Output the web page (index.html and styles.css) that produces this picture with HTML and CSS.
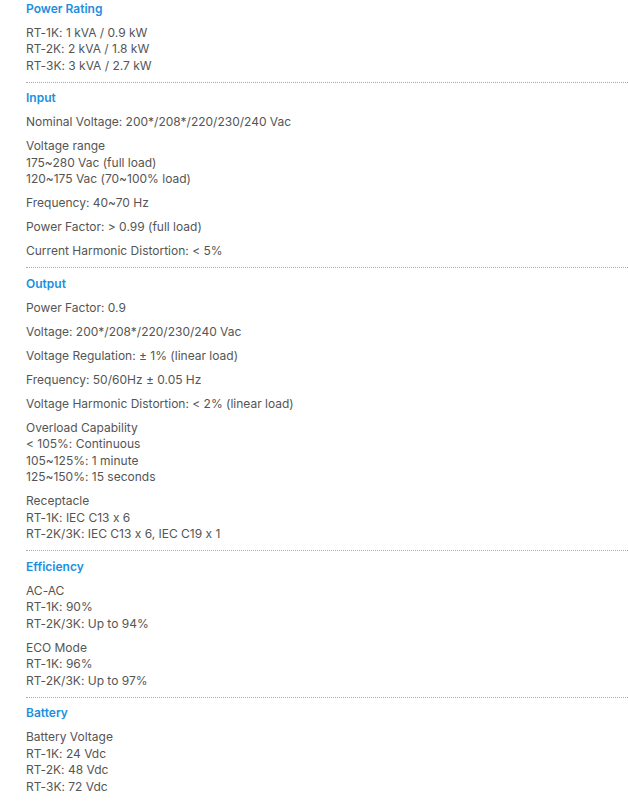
FILE: index.html
```html
<!DOCTYPE html>
<html lang="en">
<head>
    <meta charset="UTF-8">
    <meta name="viewport" content="width=device-width, initial-scale=1.0">
    <link rel="stylesheet" href="styles.css">
    <title>Specifications</title>
</head>
<body>
    <div class="specs">
        <div class="spec-group first">
            <h4>Power Rating</h4>
            <p>RT-1K: 1 kVA / 0.9 kW<br>RT-2K: 2 kVA / 1.8 kW<br>RT-3K: 3 kVA / 2.7 kW</p>
        </div>
        <div class="spec-group">
            <h4>Input</h4>
            <p>Nominal Voltage: 200*/208*/220/230/240 Vac</p>
            <p>Voltage range<br>175~280 Vac (full load)<br>120~175 Vac (70~100% load)</p>
            <p>Frequency: 40~70 Hz</p>
            <p>Power Factor: &gt; 0.99 (full load)</p>
            <p>Current Harmonic Distortion: &lt; 5%</p>
        </div>
        <div class="spec-group">
            <h4>Output</h4>
            <p>Power Factor: 0.9</p>
            <p>Voltage: 200*/208*/220/230/240 Vac</p>
            <p>Voltage Regulation: ± 1% (linear load)</p>
            <p>Frequency: 50/60Hz ± 0.05 Hz</p>
            <p>Voltage Harmonic Distortion: &lt; 2% (linear load)</p>
            <p>Overload Capability<br>&lt; 105%: Continuous<br>105~125%: 1 minute<br>125~150%: 15 seconds</p>
            <p>Receptacle<br>RT-1K: IEC C13 x 6<br>RT-2K/3K: IEC C13 x 6, IEC C19 x 1</p>
        </div>
        <div class="spec-group">
            <h4>Efficiency</h4>
            <p>AC-AC<br>RT-1K: 90%<br>RT-2K/3K: Up to 94%</p>
            <p>ECO Mode<br>RT-1K: 96%<br>RT-2K/3K: Up to 97%</p>
        </div>
        <div class="spec-group last">
            <h4>Battery</h4>
            <p>Battery Voltage<br>RT-1K: 24 Vdc<br>RT-2K: 48 Vdc<br>RT-3K: 72 Vdc</p>
        </div>
    </div>
</body>
</html>
```

FILE: styles.css
```css
body {
    margin: 0;
    background-color: #fff;
    font-family: Inter, "Noto Sans", Arial, sans-serif;
    font-feature-settings: "calt" 0;
}

.specs {
    padding-left: 26px;
}

.spec-group {
    display: flex;
    flex-direction: column;
    gap: 7.5px;
    padding: 7.5px 0 7.5px;
    border-bottom: 1px dotted #aaa;
}

.spec-group.first {
    padding-top: 0.5px;
}

.spec-group.last {
    border-bottom: none;
}

h4 {
    margin: 0;
    font-size: 12px;
    line-height: 16.5px;
    font-weight: 600;
    color: #1b8fe0;
}

p {
    margin: 0;
    font-size: 12px;
    line-height: 16.5px;
    color: #555;
}
```
